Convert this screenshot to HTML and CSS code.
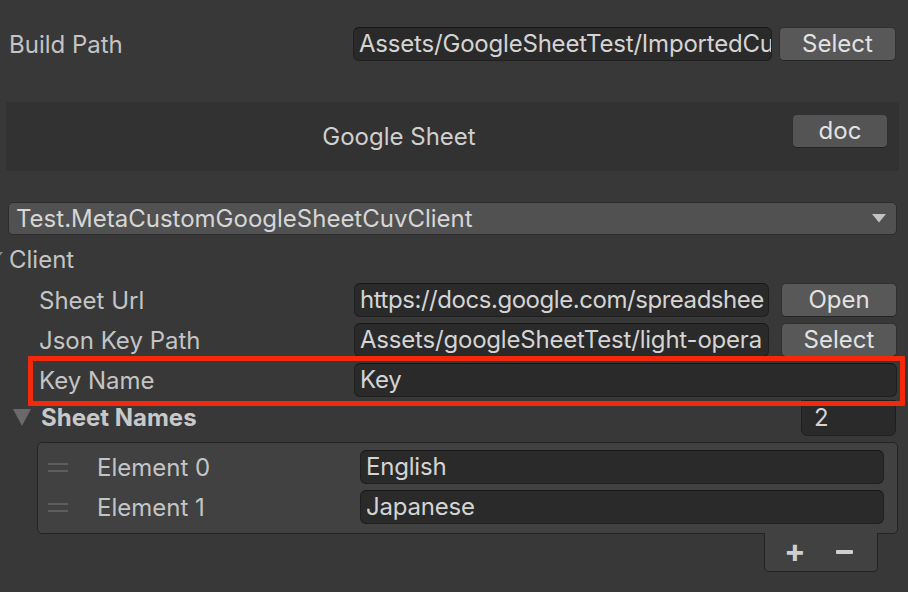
FILE: index.html
```html
<!DOCTYPE html>
<html>
<head>
<meta charset="utf-8">
<link rel="stylesheet" href="styles.css">
</head>
<body>
<div class="inspector">
  <div class="row build">
    <div class="label build-label">Build Path</div>
    <div class="field grow">Assets/GoogleSheetTest/ImportedCu</div>
    <div class="btn build-btn">Select</div>
  </div>

  <div class="header-box">
    <div class="header-title">Google Sheet</div>
    <div class="btn doc-btn">doc</div>
  </div>

  <div class="dropdown">
    <span>Test.MetaCustomGoogleSheetCuvClient</span>
    <svg class="dd-arrow" width="14" height="9" viewBox="0 0 14 9"><path d="M0 0H14L7 8.5Z" fill="#c2c2c2"/></svg>
  </div>

  <div class="client-row">
    <svg class="client-arrow" width="14" height="9" viewBox="0 0 14 9"><path d="M0 0H14L7 8.5Z" fill="#8a8a8a"/></svg>
    <span>Client</span>
  </div>

  <div class="row sub">
    <div class="label sub-label">Sheet Url</div>
    <div class="field grow tight">https://docs.google.com/spreadshee</div>
    <div class="btn sub-btn">Open</div>
  </div>
  <div class="row sub">
    <div class="label sub-label">Json Key Path</div>
    <div class="field grow">Assets/googleSheetTest/light-opera</div>
    <div class="btn sub-btn">Select</div>
  </div>
  <div class="row sub keyrow">
    <div class="label sub-label">Key Name</div>
    <div class="field grow">Key</div>
  </div>

  <div class="names-row">
    <svg class="names-arrow" width="18" height="17" viewBox="0 0 18 17"><path d="M0 0H18L9 17Z" fill="#6a6a6a"/></svg>
    <span class="names-title">Sheet Names</span>
    <div class="count">2</div>
  </div>

  <div class="list">
    <div class="list-item">
      <div class="handle"><i></i><i></i></div>
      <div class="el-label">Element 0</div>
      <div class="field grow">English</div>
    </div>
    <div class="list-item">
      <div class="handle"><i></i><i></i></div>
      <div class="el-label">Element 1</div>
      <div class="field grow">Japanese</div>
    </div>
  </div>
  <div class="footer-wrap">
    <div class="list-footer">
      <span class="plus">+</span>
      <span class="minus"></span>
    </div>
  </div>
</div>
</body>
</html>
```

FILE: styles.css
```css
html, body {
  margin: 0;
  padding: 0;
  background: #383838;
  width: 908px;
  height: 592px;
  overflow: hidden;
}
body {
  font-family: Inter, "Noto Sans", sans-serif;
  font-size: 24px;
  color: #c4c4c4;
}
.inspector {
  padding: 0 11px 0 9px;
}
.row {
  display: flex;
  align-items: center;
  height: 34px;
}
.grow { flex: 1; min-width: 0; }
.label {
  flex: none;
  white-space: nowrap;
}
.field {
  box-sizing: border-box;
  height: 34px;
  background: #2a2a2a;
  border: 1px solid #1f1f1f;
  border-top-color: #161616;
  border-radius: 6px;
  padding: 0 2px 0 5px;
  line-height: 32px;
  color: #d4d4d4;
  white-space: nowrap;
  overflow: hidden;
  letter-spacing: -0.2px;
}
.tight { letter-spacing: -0.45px; }
.btn {
  box-sizing: border-box;
  height: 34px;
  background: #585858;
  border: 1px solid #303030;
  border-bottom-color: #242424;
  border-radius: 5px;
  text-align: center;
  line-height: 32px;
  color: #e2e2e2;
  flex: none;
}
.build {
  margin-top: 27px;
}
.build-label { width: 344px; }
.build-btn { width: 117px; margin-left: 7px; margin-right: 1px; }

.header-box {
  margin: 41px -2px 0 -3px;
  height: 69px;
  background: #323232;
  display: flex;
  align-items: center;
}
.header-title {
  flex: 1;
  text-align: center;
  color: #cfcfcf;
}
.doc-btn {
  width: 96px;
  margin-right: 11px;
  margin-top: -11px;
  background: #545454;
}

.dropdown {
  box-sizing: border-box;
  margin: 31px 0 0 -1px;
  height: 33px;
  background: #515151;
  border: 1px solid #2c2c2c;
  border-radius: 5px;
  display: flex;
  align-items: center;
  padding: 0 10px 0 7px;
  color: #d6d6d6;
}
.dropdown span { flex: 1; }
.dd-arrow { flex: none; }

.client-row {
  height: 42px;
  display: flex;
  align-items: center;
  margin-left: -9px;
  margin-top: 3px;
}
.client-arrow {
  margin-left: -11px;
  margin-right: 6px;
  margin-top: -6px;
}

.sub {
  margin-top: 6px;
  padding-left: 30px;
}
.client-row + .sub { margin-top: 3px; }
.sub-label { width: 315px; }
.sub-btn { width: 116px; margin-left: 12px; }

.keyrow {
  position: relative;
}
.keyrow::after {
  content: "";
  position: absolute;
  left: 19px;
  right: -8px;
  top: -7px;
  bottom: -9px;
  border: 5px solid #f2290b;
  border-radius: 1px;
  pointer-events: none;
  z-index: 2;
}

.names-row {
  display: flex;
  align-items: center;
  height: 40px;
}
.names-arrow {
  margin-left: 4px;
  margin-right: 10px;
}
.names-title {
  flex: 1;
  font-weight: 700;
  color: #c8c8c8;
}
.count {
  box-sizing: border-box;
  width: 95px;
  height: 36px;
  margin-top: 2px;
  margin-right: 1px;
  background: #2a2a2a;
  border: 1px solid #1f1f1f;
  border-radius: 0 0 6px 6px;
  padding: 0 12px;
  line-height: 34px;
  color: #d4d4d4;
}

.list {
  box-sizing: border-box;
  margin: 5px -1px 0 28px;
  height: 92px;
  background: #414141;
  border: 1px solid #232323;
  border-radius: 5px;
  padding: 7px 13px 0 10px;
}
.list-item {
  display: flex;
  align-items: center;
  height: 34px;
  margin-bottom: 6px;
}
.handle {
  width: 20px;
  display: flex;
  flex-direction: column;
  gap: 5px;
  margin-right: 29px;
}
.handle i {
  display: block;
  height: 2px;
  background: #5e5e5e;
}
.el-label {
  width: 263px;
  color: #c4c4c4;
}

.footer-wrap {
  display: flex;
  justify-content: flex-end;
  padding-right: 19px;
}
.list-footer {
  box-sizing: border-box;
  width: 114px;
  height: 39px;
  margin-top: -1px;
  background: #414141;
  border: 1px solid #232323;
  border-top: none;
  border-radius: 0 0 5px 5px;
  display: flex;
  align-items: center;
  padding-left: 19px;
  position: relative;
}
.plus {
  font-size: 32px;
  font-weight: 700;
  color: #cfcfcf;
  line-height: 1;
  margin-top: -3px;
}
.minus {
  display: block;
  width: 17px;
  height: 4px;
  border-radius: 1px;
  background: #cfcfcf;
  margin-left: 30px;
}
```
